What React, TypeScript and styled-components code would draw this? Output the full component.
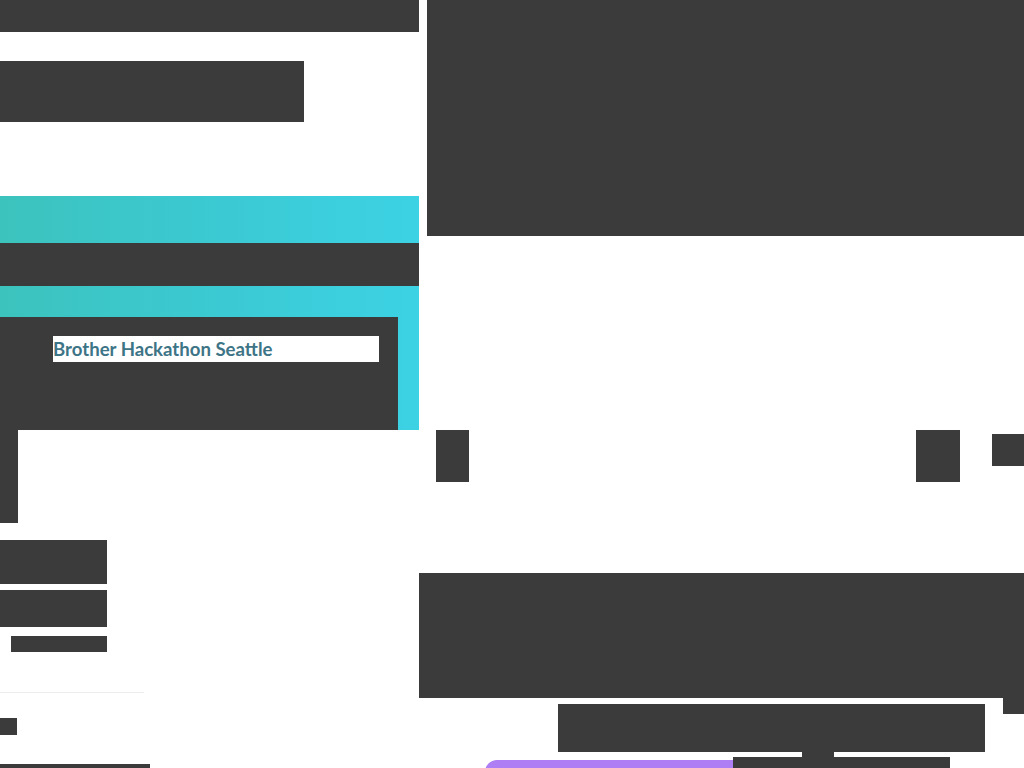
import styled, { createGlobalStyle } from "styled-components";

const GlobalStyle = createGlobalStyle`
  html, body {
    margin: 0;
    padding: 0;
    background: #fff;
    overflow: hidden;
  }
  body {
    font-family: "Lato", "Liberation Sans", sans-serif;
  }
`;

const ink = "#3b3b3b";

const Page = styled.div`
  display: grid;
  grid-template-columns: 419px 605px;
  align-items: start;
  width: 1024px;
  height: 768px;
  overflow: hidden;
`;

const LeftColumn = styled.div`
  display: flex;
  flex-direction: column;
  align-items: flex-start;
`;

const RightColumn = styled.div`
  display: flex;
  flex-direction: column;
  align-items: flex-start;
`;

const Block = styled.div<{ w: number; h: number; mt?: number; ml?: number }>`
  flex: none;
  width: ${(p) => p.w}px;
  height: ${(p) => p.h}px;
  margin-top: ${(p) => p.mt ?? 0}px;
  margin-left: ${(p) => p.ml ?? 0}px;
  background: ${ink};
`;

const Hero = styled.section`
  width: 419px;
  height: 234px;
  margin-top: 74px;
  padding-top: 47px;
  box-sizing: border-box;
  display: flex;
  flex-direction: column;
  background: linear-gradient(to right, #3cc3bd 0%, #3bcad4 55%, #3cd2e4 100%);
`;

const HeroBar = styled.div`
  height: 43px;
  background: ${ink};
`;

const EventCard = styled.div`
  width: 398px;
  height: 113px;
  margin-top: 31px;
  padding: 19px 0 0 53px;
  box-sizing: border-box;
  background: ${ink};
`;

const EventName = styled.div`
  width: 326px;
  height: 26px;
  background: #fff;
  color: #3d7486;
  font-family: "Lato", "Liberation Sans", sans-serif;
  font-weight: 700;
  font-size: 18.6px;
  line-height: 27px;
  white-space: nowrap;
  overflow: hidden;
`;

const Divider = styled.hr`
  width: 144px;
  height: 1px;
  margin: 40px 0 0;
  border: 0;
  background: #ececec;
`;

const IconRow = styled.div`
  display: flex;
  align-items: flex-start;
  width: 605px;
  margin-top: 194px;
  padding-left: 17px;
  box-sizing: border-box;
`;

const IconBox = styled.div<{ w: number; h: number; ml?: string; offset?: number }>`
  flex: none;
  width: ${(p) => p.w}px;
  height: ${(p) => p.h}px;
  margin-left: ${(p) => p.ml ?? "0"};
  margin-top: ${(p) => p.offset ?? 0}px;
  background: ${ink};
`;

const Feature = styled.div`
  position: relative;
  width: 605px;
  height: 125px;
  margin-top: 91px;
  background: ${ink};
  &::after {
    content: "";
    position: absolute;
    right: 0;
    top: 100%;
    width: 21px;
    height: 16px;
    background: ${ink};
  }
`;

const Footer = styled.div`
  display: flex;
  align-items: flex-start;
  padding-left: 66px;
`;

const Pill = styled.div`
  width: 248px;
  height: 24px;
  margin-top: 3px;
  border-radius: 12px 0 0 0;
  background: #ad7ef4;
`;

export default function App() {
  return (
    <>
      <GlobalStyle />
      <Page>
        <LeftColumn>
          <Block w={419} h={32} />
          <Block w={304} h={61} mt={29} />
          <Hero>
            <HeroBar />
            <EventCard>
              <EventName>Brother Hackathon Seattle</EventName>
            </EventCard>
          </Hero>
          <Block w={18} h={93} />
          <Block w={107} h={44} mt={17} />
          <Block w={107} h={37} mt={6} />
          <Block w={96} h={16} mt={9} ml={11} />
          <Divider />
          <Block w={17} h={17} mt={25} />
          <Block w={150} h={4} mt={29} />
        </LeftColumn>
        <RightColumn>
          <Block w={597} h={236} ml={8} />
          <IconRow>
            <IconBox w={33} h={52} />
            <IconBox w={44} h={52} ml="auto" />
            <IconBox w={32} h={32} ml="32px" offset={4} />
          </IconRow>
          <Feature />
          <Block w={427} h={48} mt={6} ml={139} />
          <Block w={32} h={5} ml={383} />
          <Footer>
            <Pill />
            <Block w={217} h={24} />
          </Footer>
        </RightColumn>
      </Page>
    </>
  );
}
